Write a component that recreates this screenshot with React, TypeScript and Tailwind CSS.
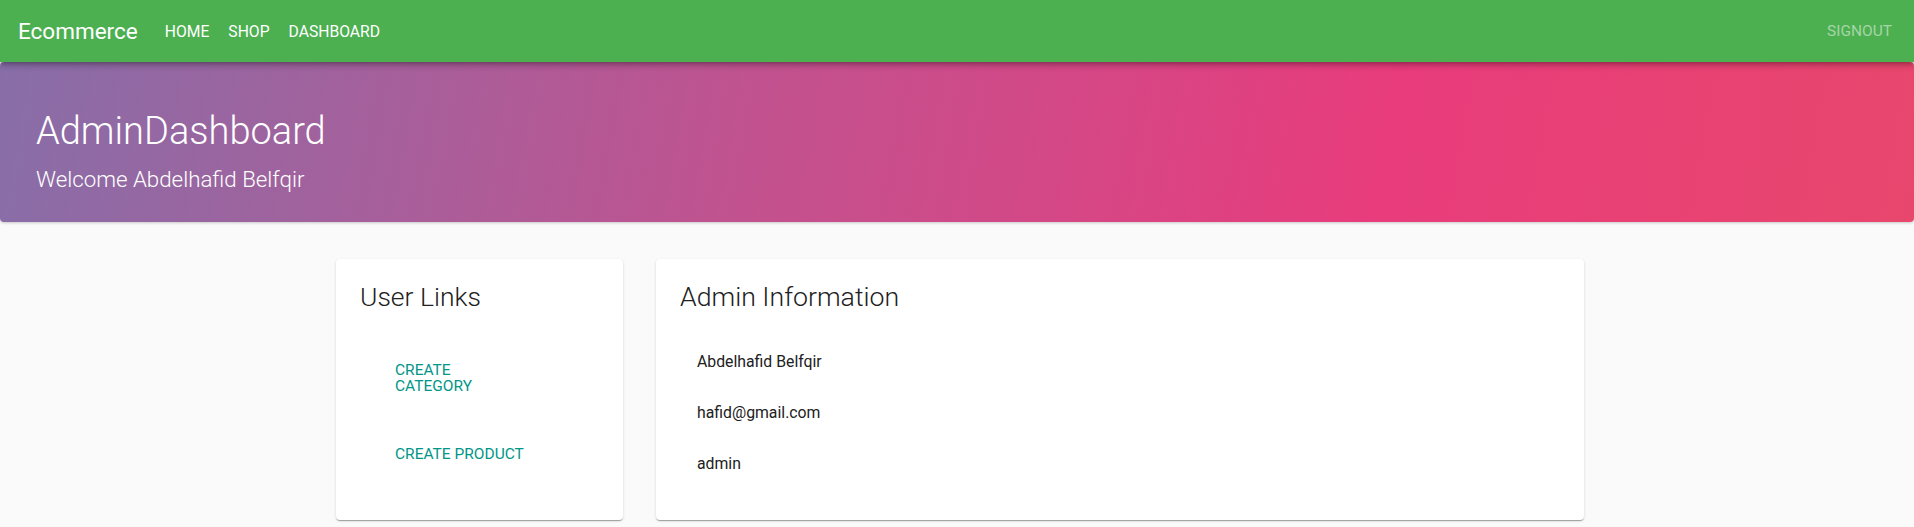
import React from "react";

const links = ["CREATE CATEGORY", "CREATE PRODUCT"];
const info = ["Abdelhafid Belfqir", "hafid@gmail.com", "admin"];

export default function App() {
    return (
        <div className="min-h-[527px] bg-[#fafafa] font-['Roboto',sans-serif]">
            <header className="relative z-10 h-[62px] bg-[#4caf50] flex items-center pl-[18px] pr-[22px] shadow-[0_2px_4px_-1px_rgba(0,0,0,0.2),0_4px_5px_0_rgba(0,0,0,0.14),0_1px_10px_0_rgba(0,0,0,0.12)]">
                <span className="text-white text-[22.5px] leading-none mr-[27px] mt-[1px]">Ecommerce</span>
                <nav className="flex gap-[19px] text-white text-[15.7px] mt-[1px]">
                    <a>HOME</a>
                    <a>SHOP</a>
                    <a>DASHBOARD</a>
                </nav>
                <a className="ml-auto text-[15.5px] text-[#a5d6a7] mt-[1px]">SIGNOUT</a>
            </header>

            <div className="h-[160px] rounded-[4px] bg-[linear-gradient(100deg,#886ea8_0%,#c2528f_40%,#e83c7c_72%,#e8476d_100%)] shadow-[0_1px_3px_rgba(0,0,0,0.2)] pl-[36px] pt-[41px] text-white font-light">
                <h1 className="text-[38px] leading-[56px]">AdminDashboard</h1>
                <p className="text-[22.3px] leading-[30px] mt-[5px]">Welcome Abdelhafid Belfqir</p>
            </div>

            <div className="flex gap-[33px] pl-[336px] pt-[37px]">
                <div className="w-[287px] h-[261px] bg-white rounded-[4px] shadow-[0_2px_1px_-1px_rgba(0,0,0,0.2),0_1px_1px_0_rgba(0,0,0,0.14),0_1px_3px_0_rgba(0,0,0,0.12)] px-[24px] pt-[20px]">
                    <h2 className="text-[26.5px] font-light text-[#212121] leading-[36px]">User Links</h2>
                    <ul className="mt-[47px] pl-[35px] flex flex-col gap-[52px]">
                        {links.map((l) => (
                            <li key={l} className="w-[134px] text-[15.5px] leading-[16px] text-[#009688]">{l}</li>
                        ))}
                    </ul>
                </div>
                <div className="w-[928px] h-[261px] bg-white rounded-[4px] shadow-[0_2px_1px_-1px_rgba(0,0,0,0.2),0_1px_1px_0_rgba(0,0,0,0.14),0_1px_3px_0_rgba(0,0,0,0.12)] px-[24px] pt-[20px]">
                    <h2 className="text-[26.7px] font-light text-[#212121] leading-[36px]">Admin Information</h2>
                    <ul className="mt-[35px] pl-[17px] flex flex-col">
                        {info.map((i) => (
                            <li key={i} className="h-[51px] text-[15.8px] leading-[24px] text-[#212121]">{i}</li>
                        ))}
                    </ul>
                </div>
            </div>
        </div>
    );
}
